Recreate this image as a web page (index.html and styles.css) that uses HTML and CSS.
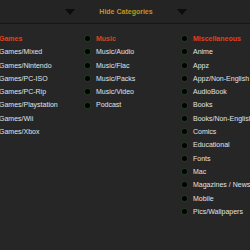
FILE: index.html
```html
<!DOCTYPE html>
<html lang="en">
<head>
  <meta charset="UTF-8" />
  <title>Categories</title>
  <link rel="stylesheet" href="styles.css">
</head>
<body>
  <!-- Toggle bar -->
  <div class="cat-toggle">
    <span class="arrow"></span>
    <a href="#" class="toggle-link">Hide Categories</a>
    <span class="arrow"></span>
  </div>

  <!-- Category columns -->
  <div class="cat-columns">
    <ul class="cat-list">
      <li class="cat-head">Games</li>
      <li>Games/Mixed</li>
      <li>Games/Nintendo</li>
      <li>Games/PC-ISO</li>
      <li>Games/PC-Rip</li>
      <li>Games/Playstation</li>
      <li>Games/Wii</li>
      <li>Games/Xbox</li>
    </ul>
    <ul class="cat-list">
      <li class="cat-head">Music</li>
      <li>Music/Audio</li>
      <li>Music/Flac</li>
      <li>Music/Packs</li>
      <li>Music/Video</li>
      <li>Podcast</li>
    </ul>
    <ul class="cat-list">
      <li class="cat-head">Miscellaneous</li>
      <li>Anime</li>
      <li>Appz</li>
      <li>Appz/Non-English</li>
      <li>AudioBook</li>
      <li>Books</li>
      <li>Books/Non-English</li>
      <li>Comics</li>
      <li>Educational</li>
      <li>Fonts</li>
      <li>Mac</li>
      <li>Magazines / Newspapers</li>
      <li>Mobile</li>
      <li>Pics/Wallpapers</li>
    </ul>
  </div>
</body>
</html>
```

FILE: styles.css
```css
/* Reset & Body */
* {
  margin: 0;
  padding: 0;
  box-sizing: border-box;
}
body {
  font-family: 'Liberation Sans', Arial, sans-serif;
  background: #262626;
  color: #dcdcdc;
  font-size: 7px;
  overflow: hidden;
  width: 250px;
  height: 250px;
}

/* Toggle bar */
.cat-toggle {
  height: 24px;
  display: flex;
  align-items: center;
  justify-content: center;
  gap: 24px;
  border-bottom: 1px solid #161616;
  background: #242424;
  padding-left: 2px;
}
.arrow {
  width: 0;
  height: 0;
  border-left: 5px solid transparent;
  border-right: 5px solid transparent;
  border-top: 6px solid #0c0c0c;
}
.toggle-link {
  color: #c8921c;
  font-weight: bold;
  text-decoration: none;
}

/* Columns */
.cat-columns {
  display: grid;
  grid-template-columns: 97px 97px 97px;
  margin-left: -12px;
  padding-top: 8px;
}
.cat-list {
  list-style: none;
}
.cat-list li {
  height: 13.3px;
  line-height: 13.3px;
  display: flex;
  align-items: center;
  gap: 6px;
  white-space: nowrap;
  color: #e2e2e2;
}
.cat-list li::before {
  content: "";
  flex: none;
  width: 5px;
  height: 5px;
  border-radius: 50%;
  background: #000;
  box-shadow: 0 0 0 1px #1d3a1d;
}
.cat-list .cat-head {
  color: #e0401c;
  font-weight: bold;
}
```
